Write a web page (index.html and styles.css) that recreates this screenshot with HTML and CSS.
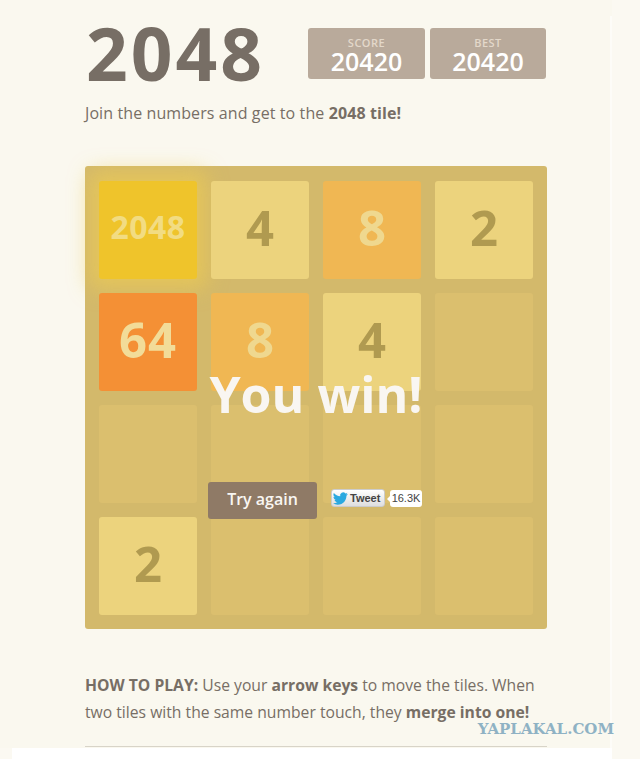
FILE: index.html
```html
<!DOCTYPE html>
<html lang="en">
<head>
  <meta charset="UTF-8">
  <meta name="viewport" content="width=device-width, initial-scale=1.0">
  <title>2048</title>
  <link rel="stylesheet" href="styles.css">
</head>
<body>
  <div class="page">
    <div class="heading">
      <h1 class="title">2048</h1>
      <div class="scores">
        <div class="score-box">
          <span class="score-label">SCORE</span>
          <span class="score-value">20420</span>
        </div>
        <div class="score-box">
          <span class="score-label">BEST</span>
          <span class="score-value">20420</span>
        </div>
      </div>
    </div>
    <p class="intro">Join the numbers and get to the <strong>2048 tile!</strong></p>

    <div class="board">
      <div class="cell tile-2048">2048</div>
      <div class="cell tile-4">4</div>
      <div class="cell tile-8">8</div>
      <div class="cell tile-2">2</div>

      <div class="cell tile-64">64</div>
      <div class="cell tile-8">8</div>
      <div class="cell tile-4">4</div>
      <div class="cell"></div>

      <div class="cell"></div>
      <div class="cell"></div>
      <div class="cell"></div>
      <div class="cell"></div>

      <div class="cell tile-2">2</div>
      <div class="cell"></div>
      <div class="cell"></div>
      <div class="cell"></div>

      <div class="win-overlay">
        <p class="win-text">You win!</p>
        <div class="win-actions">
          <a class="retry" href="#">Try again</a>
          <a class="tweet" href="#">
            <svg class="tweet-bird" viewBox="0 0 24 24" width="15" height="15"><path d="M23.6 4.600c-.9.400-1.800.700-2.800.800 1-.600 1.800-1.600 2.200-2.700-1 .600-2 1-3.100 1.200A4.900 4.900 0 0 0 11.500 8.400C7.400 8.200 3.800 6.200 1.400 3.200c-.4.700-.7 1.600-.7 2.500 0 1.700.9 3.200 2.200 4.100-.8 0-1.600-.2-2.200-.6v.1c0 2.400 1.700 4.400 3.900 4.800-.4.100-.8.200-1.300.2-.3 0-.6 0-.9-.1.600 2 2.400 3.400 4.600 3.400A9.900 9.900 0 0 1 0 19.700 13.900 13.900 0 0 0 7.500 22c9.100 0 14-7.500 14-14v-.6c1-.7 1.800-1.600 2.100-2.800z"/></svg>
            Tweet
          </a>
          <span class="tweet-count">16.3K</span>
        </div>
      </div>
    </div>

    <p class="howto"><strong>HOW TO PLAY:</strong> Use your <strong>arrow keys</strong> to move the tiles. When two tiles with the same number touch, they <strong>merge into one!</strong></p>
    <hr class="rule">
  </div>
  <div class="page-end"></div>
  <div class="watermark">YAPLAKAL.COM</div>
</body>
</html>
```

FILE: styles.css
```css
html, body {
  margin: 0;
  height: 759px;
  overflow: hidden;
  background: #fbf9f2;
}

body {
  font-family: "Open Sans", "Noto Sans", sans-serif;
  color: #776e65;
  position: relative;
}

.page {
  width: 612px;
  height: 748px;
  box-sizing: border-box;
  padding: 0 65px 0 85px;
  background: #faf8ef;
  position: relative;
}

/* thin light edge down the right of the page */
.page::after {
  content: "";
  position: absolute;
  right: 0;
  top: 16px;
  bottom: 0;
  width: 2px;
  background: #fdfcf8;
}

.page-end {
  height: 11px;
  margin-left: 12px;
  width: 600px;
  background: #fff;
}

.heading {
  display: flex;
  justify-content: space-between;
  padding-top: 19px;
  height: 70px;
}

.title {
  margin: 0;
  font-size: 73px;
  line-height: 68px;
  font-weight: 700;
  letter-spacing: 3px;
  padding-left: 1px;
}

.scores {
  display: flex;
  gap: 5px;
  margin-top: 9px;
  margin-right: 1px;
}

.score-box {
  width: 117px;
  height: 51px;
  display: flex;
  flex-direction: column;
  align-items: center;
  background: #b9aa9b;
  border-radius: 3px;
  color: #fff;
}

.score-box:last-child {
  width: 116px;
}

.score-label {
  margin-top: 9px;
  font-size: 11px;
  line-height: 12px;
  font-weight: 600;
  color: #e3d8ca;
  letter-spacing: .5px;
}

.score-value {
  font-size: 25px;
  line-height: 25px;
  font-weight: 600;
}

.intro {
  margin: 14px 0 0;
  font-size: 16px;
  line-height: 20px;
  letter-spacing: .1px;
}

.board {
  position: relative;
  margin-top: 43px;
  width: 462px;
  height: 463px;
  box-sizing: border-box;
  padding: 15px 14px 14px;
  display: grid;
  grid-template-columns: repeat(4, 98px);
  grid-template-rows: repeat(4, 98px);
  gap: 14px;
  background: #d3b96b;
  border-radius: 3px;
}

.cell {
  display: flex;
  align-items: center;
  justify-content: center;
  box-sizing: border-box;
  padding-bottom: 7px;
  border-radius: 3px;
  background: #dbbf6e;
  font-size: 49px;
  font-weight: 700;
}

.tile-2, .tile-4 {
  background: #ecd37d;
  color: #b09a50;
}

.tile-8 {
  background: #f0b753;
  color: #efd88f;
}

.tile-64 {
  background: #f49035;
  color: #f2dc98;
  letter-spacing: 1px;
}

.tile-2048 {
  background: #efc42b;
  color: #f2dc82;
  font-size: 32px;
  letter-spacing: .5px;
  box-shadow: 0 0 20px 10px rgba(240, 205, 80, .6);
}

.win-overlay {
  position: absolute;
  inset: 0;
  display: flex;
  flex-direction: column;
  align-items: center;
}

.win-text {
  margin: 198px 0 0;
  font-size: 50px;
  line-height: 60px;
  font-weight: 700;
  color: #f9f6f2;
}

.win-actions {
  display: flex;
  align-items: flex-start;
  margin-top: 58px;
  width: 216px;
}

.retry {
  width: 109px;
  height: 37px;
  line-height: 34px;
  text-align: center;
  background: #8f7a66;
  border-radius: 3px;
  color: #f9f6f2;
  font-size: 16px;
  font-weight: 600;
  text-decoration: none;
}

.tweet {
  display: flex;
  align-items: center;
  gap: 2px;
  margin: 7px 0 0 14px;
  width: 54px;
  height: 18px;
  box-sizing: border-box;
  padding-left: 1px;
  border: 1px solid #ccc;
  border-radius: 3px;
  background: linear-gradient(#fff, #dedede);
  font: 700 11px "Liberation Sans", sans-serif;
  color: #444;
  text-decoration: none;
}

.tweet-bird {
  fill: #2aa9e0;
  flex: none;
}

.tweet-count {
  position: relative;
  margin: 8px 0 0 5px;
  width: 32px;
  height: 17px;
  text-align: center;
  background: #fff;
  border-radius: 3px;
  font: 11px/17px "Liberation Sans", sans-serif;
  color: #444;
}

.tweet-count::before {
  content: "";
  position: absolute;
  left: -3px;
  top: 6px;
  border-style: solid;
  border-width: 3px 3px 3px 0;
  border-color: transparent #fff transparent transparent;
}

.howto {
  margin: 43px 0 0;
  font-size: 15.7px;
  line-height: 27px;
}

.rule {
  margin: 20px 0 0;
  border: 0;
  border-top: 1px solid #d8d4c8;
}

.watermark {
  position: absolute;
  right: 26px;
  top: 722px;
  font: 700 15px/15px "DejaVu Serif", serif;
  color: #8fb2c4;
}
```
